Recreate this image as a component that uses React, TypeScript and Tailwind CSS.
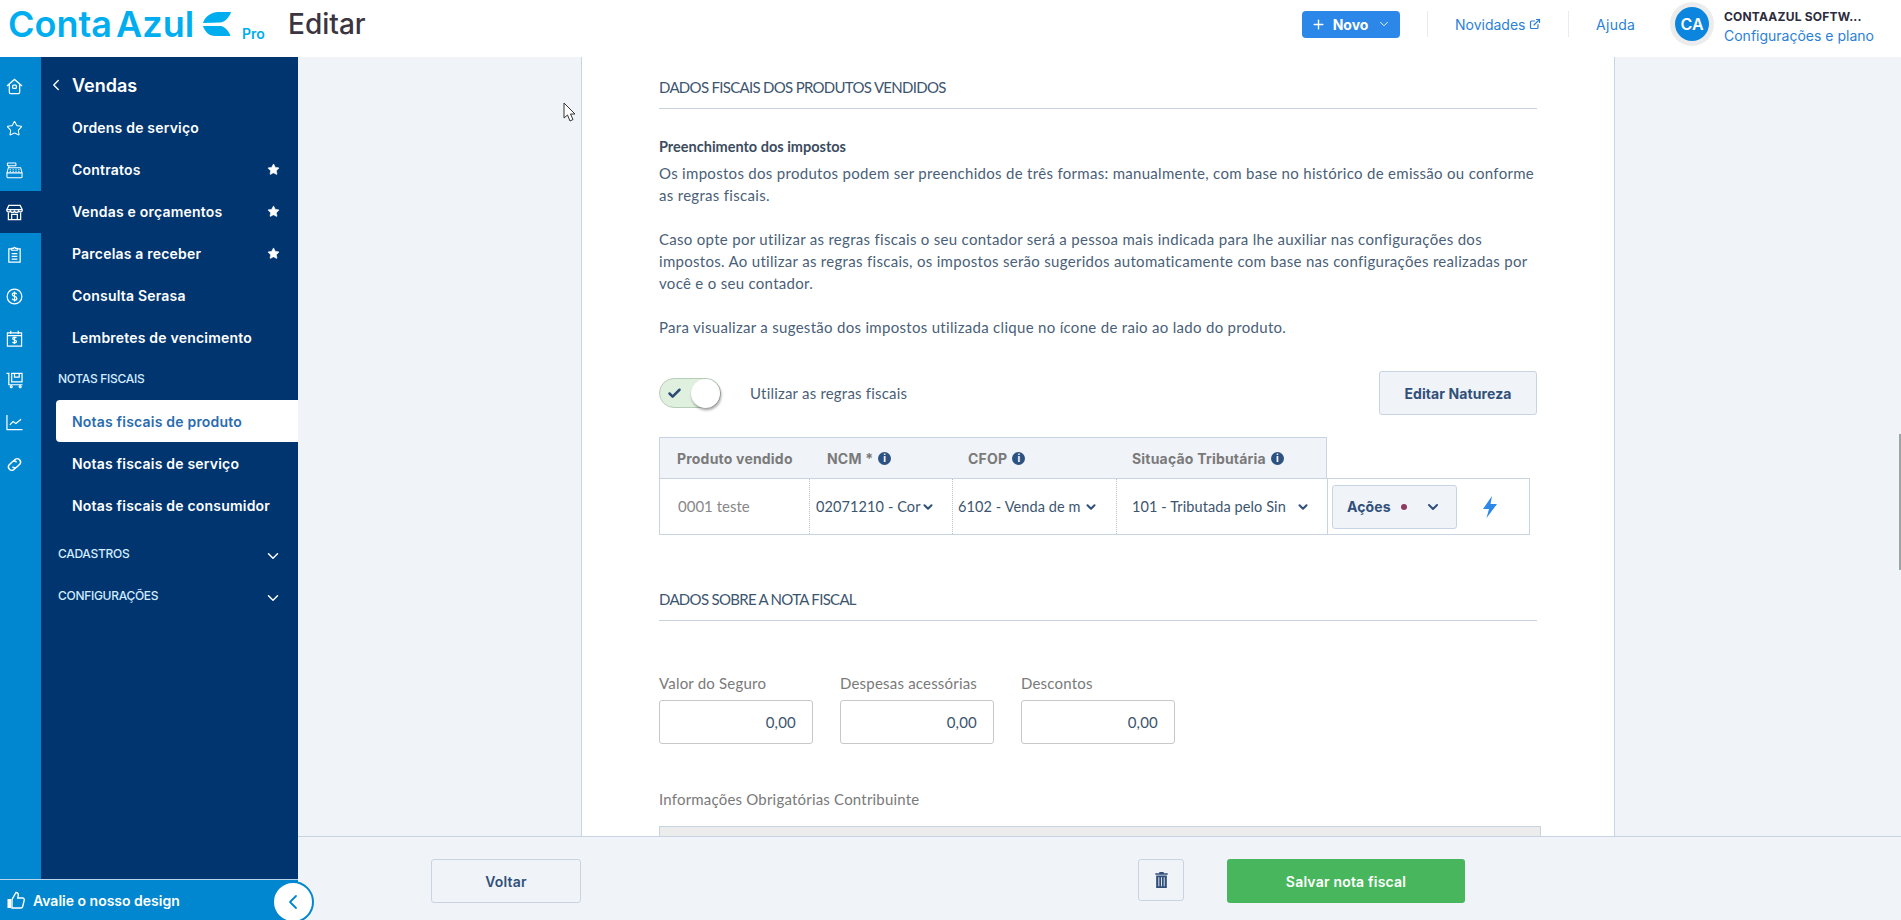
import type { ReactNode } from 'react'
import { Check, ChevronDown, ChevronLeft, ExternalLink, Plus, Star } from 'lucide-react'

const railClass = 'h-[17px] w-[17px]'

const railIcons = [
  <svg key="home" viewBox="0 0 18 18" fill="none" stroke="currentColor" strokeWidth="1.3" className={railClass}>
    <path d="M1 8.500 9 1.500l8 7M3.500 7v8a1.500 1.500 0 0 0 1.500 1.500h8a1.500 1.500 0 0 0 1.500-1.500V7" />
    <rect x="7" y="7.500" width="4" height="3.500" rx="1" />
  </svg>,
  <Star key="star" className={railClass} strokeWidth={1.5} />,
  <svg key="register" viewBox="0 0 18 18" fill="none" stroke="currentColor" strokeWidth="1.1" className={railClass}>
    <rect x="1.500" y="1" width="9" height="3" rx=".5" />
    <path d="M3 4v2M2.500 6h13l1.500 5.500H1zM1 11.500h16v4a1.200 1.200 0 0 1-1.200 1.200H2.200A1.200 1.200 0 0 1 1 15.500z" />
    <path d="M4 8.200h1.200M7 8.200h1.200M10 8.200h1.200M13 8.200h1.200M4 10h1.200M7 10h1.200M10 10h1.200M13 10h1.200" strokeWidth="1" />
  </svg>,
  <svg key="store" viewBox="0 0 18 18" fill="none" stroke="currentColor" strokeWidth="1.3" className={railClass}>
    <path d="M3 1.500h12l2.200 4.500a2 2 0 0 1-4 .8 2.100 2.100 0 0 1-4.200 0 2.100 2.100 0 0 1-4.200 0 2 2 0 0 1-4-.8zM1 6h16" />
    <path d="M2.500 9v7.500h13V9M6 16.500V11h6v5.500" />
  </svg>,
  <svg key="clipboard" viewBox="0 0 18 18" fill="none" stroke="currentColor" strokeWidth="1.3" className={railClass}>
    <path d="M6 3H3v14h12V3h-3" />
    <path d="M6 4.500V2.500h2a1 1 0 0 1 2 0h2v2zM6 8h6M6 11h6M6 14h6" />
  </svg>,
  <svg key="money" viewBox="0 0 18 18" fill="none" stroke="currentColor" strokeWidth="1.3" className={railClass}>
    <circle cx="9" cy="9" r="7.800" />
    <path d="M11.300 6.500C10.800 5.500 10 5.200 9 5.200c-1.300 0-2.300.7-2.300 1.800 0 2.600 4.800 1.300 4.800 4 0 1.100-1 1.800-2.500 1.800-1.100 0-2-.4-2.500-1.400M9 3.800v10.400" />
  </svg>,
  <svg key="calendar" viewBox="0 0 18 18" fill="none" stroke="currentColor" strokeWidth="1.3" className={railClass}>
    <path d="M1.500 3h15v14h-15zM1.500 6h15M5 .8v3.500M13 .8v3.500" />
    <path d="M11 8.500c-.4-.6-1.100-.9-2-.9-1.100 0-1.900.6-1.900 1.500 0 2 4 1 4 3 0 .9-.9 1.500-2.100 1.500-.9 0-1.700-.3-2.100-1M9 6.800v8" />
  </svg>,
  <svg key="cart" viewBox="0 0 18 18" fill="none" stroke="currentColor" strokeWidth="1.3" className={railClass}>
    <path d="M.5 1.500h2.500v12h14.500M6 1.500h11v9H6zM9 1.500v4h5v-4" />
    <circle cx="5.500" cy="15.500" r="1" />
    <circle cx="15" cy="15.500" r="1" />
  </svg>,
  <svg key="chart" viewBox="0 0 18 18" fill="none" stroke="currentColor" strokeWidth="1.3" className={railClass}>
    <path d="M1 1v15.500h16.500M4 11.500l3.500-3.500 3 2 5.500-4.500" />
  </svg>,
  <svg key="link" viewBox="0 0 18 18" fill="none" stroke="currentColor" strokeWidth="1.5" className={railClass}>
    <path d="M7.800 5.500 9.800 3.500a3.600 3.600 0 0 1 5 5l-3 3a3.600 3.600 0 0 1-5 0" />
    <path d="M10.200 12.500 8.200 14.500a3.600 3.600 0 0 1-5-5l3-3a3.600 3.600 0 0 1 5 0" />
  </svg>,
]

const menuItems = [
  { label: 'Ordens de serviço' },
  { label: 'Contratos', star: true },
  { label: 'Vendas e orçamentos', star: true },
  { label: 'Parcelas a receber', star: true },
  { label: 'Consulta Serasa' },
  { label: 'Lembretes de vencimento' },
]

const Rail = () => (
  <nav className="flex w-[41px] shrink-0 flex-col bg-[#0087d0] pt-[8px] text-white">
    {railIcons.map((icon, i) => (
      <div key={i} className={`flex h-[42px] items-center pl-[6px] ${i === 3 ? 'bg-[#00356f]' : ''}`}>
        {icon}
      </div>
    ))}
  </nav>
)

const SideLink = ({ label, star }: { label: string; star?: boolean }) => (
  <a className="flex h-[42px] items-center justify-between pl-[31px] pr-[18px] text-[14px] font-semibold tracking-[0.2px] text-white">
    <span>{label}</span>
    {star && <Star className="h-[13px] w-[13px] fill-white" strokeWidth={1} />}
  </a>
)

const SideGroup = ({ label, chevron }: { label: string; chevron?: boolean }) => (
  <div className="flex h-[42px] items-center justify-between pl-[17px] pr-[16px] text-[12px] font-medium tracking-[-0.3px] text-[#d3ecff]">
    <span>{label}</span>
    {chevron && <ChevronDown className="mt-[4px] h-[18px] w-[18px] text-white" strokeWidth={2} />}
  </div>
)

const Sidebar = () => (
  <aside className="relative z-10 flex w-[298px] shrink-0 flex-col font-['Inter',sans-serif]">
    <div className="flex min-h-0 flex-1">
      <Rail />
      <div className="flex flex-1 flex-col bg-[#00356f] pt-[7px]">
        <div className="flex h-[42px] items-center pl-[6px] text-[18px] font-semibold text-white">
          <ChevronLeft className="mr-[7px] h-[18px] w-[18px]" strokeWidth={1.8} />
          Vendas
        </div>
        {menuItems.map((item) => (
          <SideLink key={item.label} {...item} />
        ))}
        <SideGroup label="NOTAS FISCAIS" />
        <div className="ml-[15px] flex h-[42px] items-center rounded-l-[4px] bg-white pl-[16px] text-[14px] font-semibold tracking-[0.2px] text-[#2a6cb0]">
          Notas fiscais de produto
        </div>
        <SideLink label="Notas fiscais de serviço" />
        <SideLink label="Notas fiscais de consumidor" />
        <div className="mt-[7px]">
          <SideGroup label="CADASTROS" chevron />
        </div>
        <SideGroup label="CONFIGURAÇÕES" chevron />
      </div>
    </div>
    <div className="flex h-[41px] items-center border-t border-[#b9d5ea] bg-[#0087d0] pl-[7px] text-[14px] font-semibold text-white">
      <svg viewBox="0 0 18 18" fill="none" stroke="currentColor" strokeWidth="1.4" className="mr-[8px] h-[18px] w-[18px]">
        <rect x=".5" y="8" width="3.500" height="9" fill="currentColor" strokeWidth="0" />
        <path d="M5 8.500 9 1.500c1.500 0 2.500 1 2.300 2.500L10.800 7h4.700c1.200 0 2 1 1.700 2.200l-1.500 6.300c-.2.900-1 1.500-1.900 1.500H5z" />
      </svg>
      Avalie o nosso design
    </div>
    <button className="absolute bottom-[-3px] left-[272px] flex h-[42px] w-[42px] items-center justify-center rounded-full border-2 border-[#0087d0] bg-white text-[#0087d0]">
      <ChevronLeft className="h-[24px] w-[24px]" strokeWidth={1.8} />
    </button>
  </aside>
)

const Header = () => (
  <header className="flex h-[57px] shrink-0 items-center bg-white pb-[9px] pl-[8px] pr-[23px] font-['Inter',sans-serif]">
    <span className="w-[184px] whitespace-nowrap text-[36px] font-semibold text-[#00aeef] [word-spacing:-5px]">Conta Azul</span>
    <svg viewBox="0 0 30 27" className="ml-[11px] h-[27px] w-[30px] fill-[#00aeef]">
      <path d="M0 12C2 5 9 1 15 1h13c-2 6-6 10-11 10.500z" />
      <path d="M0 15h18c4 1 8 5 9.500 10H12C6 25 2 21 0 15z" />
    </svg>
    <span className="ml-[9px] mt-[18px] w-[24px] text-[14px] font-semibold text-[#00aeef]">Pro</span>
    <h1 className="ml-[22px] text-[28px] font-medium text-[#3a3540]">Editar</h1>
    <button className="ml-auto flex h-[27px] w-[98px] items-center justify-center gap-[7px] rounded-[4px] bg-[#2b87e8] text-[14px] font-bold text-white">
      <Plus className="h-[15px] w-[15px]" strokeWidth={2.2} />
      Novo
      <ChevronDown className="ml-[2px] h-[14px] w-[14px]" strokeWidth={1.6} />
    </button>
    <div className="ml-[27px] h-[26px] w-px bg-[#e8ecf2]" />
    <a className="ml-[27px] flex w-[86px] items-center justify-between whitespace-nowrap text-[14px] text-[#2b7fd9]">
      Novidades
      <ExternalLink className="h-[12px] w-[12px]" strokeWidth={2.4} />
    </a>
    <div className="ml-[27px] h-[26px] w-px bg-[#e8ecf2]" />
    <a className="ml-[27px] w-[39px] text-[14px] tracking-[0.3px] text-[#2b7fd9]">Ajuda</a>
    <div className="ml-[35px] flex h-[44px] w-[44px] items-center justify-center rounded-full bg-[#ececec]">
      <div className="flex h-[34px] w-[34px] items-center justify-center rounded-full bg-[#0c85df] text-[16px] font-semibold text-white">
        CA
      </div>
    </div>
    <div className="ml-[10px] mt-[4px] flex w-[154px] flex-col">
      <span className="whitespace-nowrap text-[12px] font-bold leading-[18px] tracking-[0.2px] text-[#2b2b3b]">CONTAAZUL SOFTW...</span>
      <span className="mt-[1px] whitespace-nowrap text-[14px] leading-[18px] text-[#2b7fd9]">Configurações e plano</span>
    </div>
  </header>
)

const SectionTitle = ({ children, className }: { children: string; className: string }) => (
  <h2 className={`border-b border-[#c9d4e2] pb-[11px] text-[15px] leading-[20px] tracking-[-0.7px] text-[#3c556f] ${className}`}>
    {children}
  </h2>
)

const Info = () => (
  <span className="ml-[5px] inline-flex h-[13px] w-[13px] items-center justify-center rounded-full bg-[#2c5282] text-[10px] font-bold tracking-normal text-white">
    i
  </span>
)

const HeadCell = ({ children, className }: { children: ReactNode; className: string }) => (
  <div className={`flex items-center font-['Inter',sans-serif] text-[14px] font-bold tracking-[0.2px] text-[#7a7a7a] ${className}`}>{children}</div>
)

const SelectCell = ({ value, className, valueClass }: { value: string; className: string; valueClass: string }) => (
  <div className={`flex items-center border-l border-dotted border-[#b8c2cf] ${className}`}>
    <span className={`whitespace-nowrap text-[14.5px] tracking-[0.1px] text-[#3c556f] ${valueClass}`}>{value}</span>
    <ChevronDown className="h-[14px] w-[14px] text-[#30507a]" strokeWidth={3.5} />
  </div>
)

const MoneyField = ({ label }: { label: string }) => (
  <div className="flex w-[154px] flex-col">
    <label className="text-[15px] leading-[20px] tracking-[0.2px] text-[#7a7a7a]">{label}</label>
    <div className="mt-[7px] flex h-[44px] items-center justify-end rounded-[3px] border border-[#c8c8c8] bg-white pr-[16px] text-[15px] tracking-[0.2px] text-[#3c556f]">
      0,00
    </div>
  </div>
)

const Panel = () => (
  <div className="ml-[283px] h-full w-[1034px] overflow-hidden border-x border-[#c9d4e2] bg-white pl-[77px] font-['Lato',sans-serif]">
    <div className="w-[878px]">
      <SectionTitle className="mt-[20px]">DADOS FISCAIS DOS PRODUTOS VENDIDOS</SectionTitle>
      <div className="mt-[27px] text-[15px] leading-[22px] tracking-[0.3px] text-[#4a5f78]">
        <h3 className="text-[14.5px] font-bold leading-[22px] tracking-normal text-[#3c4c60]">Preenchimento dos impostos</h3>
        <p className="mt-[4px]">
          Os impostos dos produtos podem ser preenchidos de três formas: manualmente, com base no histórico de emissão ou conforme as regras fiscais.
        </p>
        <p className="mt-[22px]">
          Caso opte por utilizar as regras fiscais o seu contador será a pessoa mais indicada para lhe auxiliar nas configurações dos impostos. Ao utilizar as regras fiscais, os impostos serão sugeridos automaticamente com base nas configurações realizadas por você e o seu contador.
        </p>
        <p className="mt-[22px]">Para visualizar a sugestão dos impostos utilizada clique no ícone de raio ao lado do produto.</p>
      </div>

      <div className="mt-[33px] flex h-[44px] items-center">
        <div className="flex h-[30px] w-[62px] items-center rounded-full border border-[#b8cdb8] bg-[#dff0df] pl-[7px] text-[#2c4a72]">
          <Check className="h-[15px] w-[15px]" strokeWidth={4} />
          <div className="ml-auto h-[29px] w-[29px] rounded-full bg-white shadow-[1px_2px_3px_rgba(0,0,0,0.4)]" />
        </div>
        <span className="ml-[29px] text-[15px] tracking-[0.2px] text-[#4a5f78]">Utilizar as regras fiscais</span>
        <button className="ml-auto h-[44px] w-[158px] rounded-[3px] border border-[#c9d4e2] bg-[#f0f3f8] font-['Inter',sans-serif] text-[14px] font-bold tracking-[0.1px] text-[#30507a]">
          Editar Natureza
        </button>
      </div>

      <div className="mt-[22px] flex h-[42px] w-[668px] border border-[#c9d4e2] bg-[#f0f3f8]">
        <HeadCell className="w-[167px] pl-[17px]">Produto vendido</HeadCell>
        <HeadCell className="w-[141px]">NCM *<Info /></HeadCell>
        <HeadCell className="w-[164px]">CFOP<Info /></HeadCell>
        <HeadCell className="flex-1">Situação Tributária<Info /></HeadCell>
      </div>
      <div className="-mt-px flex h-[57px] w-[871px] border border-[#c9d4e2]">
        <div className="flex w-[149px] items-center pl-[18px] text-[15px] text-[#888888]">0001 teste</div>
        <SelectCell value="02071210 - Cor" className="w-[143px] pl-[6px]" valueClass="w-[104px] mr-[1px]" />
        <SelectCell value="6102 - Venda de m" className="w-[164px] pl-[5px]" valueClass="w-[122px] mr-[4px]" />
        <SelectCell value="101 - Tributada pelo Sin" className="w-[211px] pl-[15px]" valueClass="w-[156px] mr-[8px]" />
        <div className="flex flex-1 items-center border-l border-[#c9d4e2] pl-[4px]">
          <button className="flex h-[44px] w-[125px] items-center rounded-[3px] border border-[#c9d4e2] bg-[#f0f3f8] pl-[14px] font-['Inter',sans-serif] text-[14px] font-bold tracking-[0.1px] text-[#30507a]">
            Ações
            <span className="ml-[10px] h-[6px] w-[6px] rounded-full bg-[#8e3a60]" />
            <ChevronDown className="ml-[18px] h-[16px] w-[16px]" strokeWidth={3} />
          </button>
          <svg viewBox="0 0 14 22" className="ml-[26px] h-[22px] w-[14px] fill-[#2b87e8]">
            <path d="M9 0 0 13h6L3.500 22 14 8H7.500z" />
          </svg>
        </div>
      </div>

      <SectionTitle className="mt-[54px]">DADOS SOBRE A NOTA FISCAL</SectionTitle>
      <div className="mt-[52px] flex gap-[27px]">
        <MoneyField label="Valor do Seguro" />
        <MoneyField label="Despesas acessórias" />
        <MoneyField label="Descontos" />
      </div>
      <p className="mt-[45px] text-[15px] leading-[20px] tracking-[0.2px] text-[#7a7a7a]">Informações Obrigatórias Contribuinte</p>
      <div className="mt-[17px] h-[60px] w-[882px] border border-[#c9d4e2] bg-[#ececec]" />
    </div>
  </div>
)

const Footer = () => (
  <footer className="flex h-[84px] shrink-0 items-start border-t border-[#c9d4e2] bg-[#f0f3f8] pl-[133px] pt-[22px] font-['Inter',sans-serif]">
    <button className="h-[44px] w-[150px] rounded-[3px] border border-[#c9d4e2] text-[14px] font-semibold tracking-[0.2px] text-[#30507a]">Voltar</button>
    <button className="ml-[557px] flex h-[42px] w-[46px] items-center justify-center rounded-[3px] border border-[#c9d4e2]">
      <svg viewBox="0 0 14 18" className="h-[16px] w-[13px] fill-[#30507a]">
        <path d="M4.500 1.500V0h5v1.500H14V3H0V1.500zM1 4h12v14H1zm2.500 2v10h1V6zm3 0v10h1V6zm3 0v10h1V6z" fillRule="evenodd" />
      </svg>
    </button>
    <button className="ml-[43px] h-[44px] w-[238px] rounded-[3px] bg-[#48b65c] text-[14px] font-semibold tracking-[0.2px] text-white">Salvar nota fiscal</button>
  </footer>
)

export default function App() {
  return (
    <div className="relative flex h-screen w-full flex-col overflow-hidden bg-[#f0f3f8]">
      <Header />
      <div className="flex min-h-0 flex-1">
        <Sidebar />
        <main className="flex min-w-0 flex-1 flex-col">
          <div className="min-h-0 flex-1">
            <Panel />
          </div>
          <Footer />
        </main>
      </div>
      <div className="absolute right-0 top-[434px] h-[136px] w-[2px] bg-[#9aa5a5]" />
      <svg viewBox="0 0 14 20" className="absolute left-[563px] top-[102px] h-[20px] w-[14px]">
        <path d="M1 1v15l3.500-3 2.500 6 3-1.500-2.500-5.500H12z" fill="white" stroke="#333" strokeWidth="1" />
      </svg>
    </div>
  )
}
